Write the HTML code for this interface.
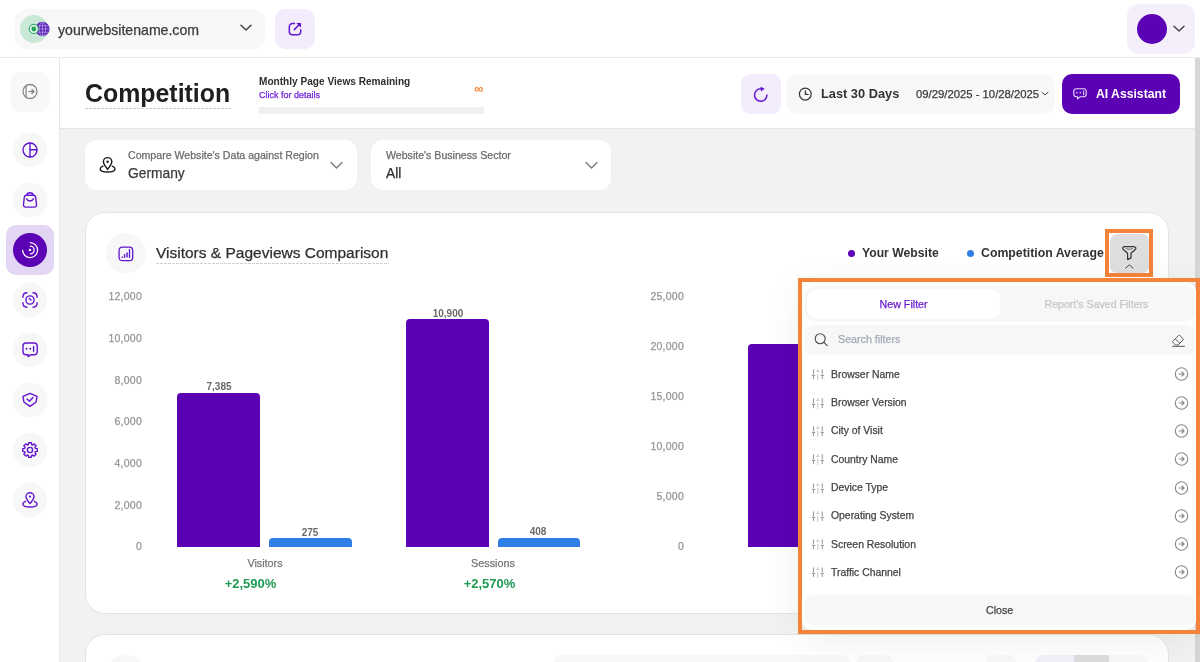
<!DOCTYPE html>
<html><head><meta charset="utf-8">
<style>
*{box-sizing:border-box;margin:0;padding:0}
html,body{width:1200px;height:662px;overflow:hidden;background:#fff;font-family:"Liberation Sans",sans-serif;color:#333}
#root{position:absolute;left:0;top:0;width:1200px;height:662px;overflow:hidden;will-change:transform}
.a{position:absolute}
svg{position:absolute;overflow:visible}
.t{position:absolute;white-space:nowrap;line-height:1;-webkit-text-stroke:0.25px currentColor}
.t[style*="font-weight:700"]{-webkit-text-stroke:0}
</style></head><body><div id="root">
<!-- HEADER -->
<div class="a" style="left:0;top:0;width:1200px;height:57px;background:#fff"></div>
<div class="a" style="left:0;top:57px;width:1200px;height:1px;background:#ebebeb"></div>
<!-- site selector -->
<div class="a" style="left:15px;top:9px;width:250px;height:40px;background:#f8f8f8;border-radius:12px"></div>
<div class="a" style="left:20px;top:15px;width:28px;height:28px;border-radius:50%;background:#c9e8d6"></div>
<svg style="left:0;top:0" width="60" height="60">
  <circle cx="42.4" cy="29" r="7.2" fill="#5a1fb8"/>
  <g stroke="#c9b8ef" stroke-width="0.6" fill="none"><ellipse cx="42.4" cy="29" rx="3.2" ry="7"/><line x1="35.5" y1="25.8" x2="49.3" y2="25.8"/><line x1="35.2" y1="29" x2="49.6" y2="29"/><line x1="35.5" y1="32.2" x2="49.3" y2="32.2"/><line x1="42.4" y1="22" x2="42.4" y2="36"/></g>
  <circle cx="33.8" cy="29" r="4.6" fill="#e3f3ea" stroke="#1fa35a" stroke-width="1"/>
  <circle cx="33.8" cy="29" r="2.4" fill="#1fa35a"/>
</svg>
<div class="t" style="left:58px;top:23px;font-size:14.1px;color:#3a3a3a">yourwebsitename.com</div>
<svg style="left:240px;top:24px" width="12" height="8"><path d="M1 1.2 L6 6 L11 1.2" stroke="#444" stroke-width="1.5" fill="none" stroke-linecap="round" stroke-linejoin="round"/></svg>
<!-- external link btn -->
<div class="a" style="left:275px;top:9px;width:40px;height:40px;background:#f2ecfc;border-radius:10px"></div>
<svg style="left:287px;top:21px" width="16" height="16"><path d="M7.5 2.6 H5.6 a3.3 3.3 0 0 0 -3.3 3.3 V10.4 a3.3 3.3 0 0 0 3.3 3.3 H10.4 a3.3 3.3 0 0 0 3.3 -3.3 V8.8" stroke="#6316d0" stroke-width="1.5" fill="none" stroke-linecap="round"/><path d="M7.3 8.6 L12.6 3.3" stroke="#6316d0" stroke-width="1.5" stroke-linecap="round"/><path d="M9.2 1.9 H14 V6.7 Z" fill="#6316d0"/></svg>
<!-- avatar -->
<div class="a" style="left:1127px;top:4px;width:68px;height:49.5px;background:#f4effb;border-radius:12px"></div>
<div class="a" style="left:1136.5px;top:14px;width:30px;height:30px;border-radius:50%;background:#5b02b5"></div>
<svg style="left:1173px;top:25px" width="12" height="8"><path d="M1 1.2 L6 6 L11 1.2" stroke="#444" stroke-width="1.5" fill="none" stroke-linecap="round" stroke-linejoin="round"/></svg>

<!-- SIDEBAR -->
<div class="a" style="left:59px;top:58px;width:1px;height:604px;background:#e6e6e6"></div>
<div class="a" style="left:10px;top:72px;width:40px;height:40px;background:#f8f8f8;border-radius:10px"></div>
<svg style="left:0;top:0" width="60" height="662">
  <g fill="#f7f7f7">
    <circle cx="30" cy="150" r="17.3"/><circle cx="30" cy="200" r="17.3"/>
    <circle cx="30" cy="300" r="17.3"/><circle cx="30" cy="350" r="17.3"/>
    <circle cx="30" cy="400" r="17.3"/><circle cx="30" cy="450" r="17.3"/><circle cx="30" cy="500" r="17.3"/>
  </g>
  <!-- collapse icon -->
  <g stroke="#8a8a8a" stroke-width="1.3" fill="none" stroke-linecap="round" stroke-linejoin="round">
    <circle cx="30" cy="91.5" r="7"/><line x1="26.1" y1="85.8" x2="26.1" y2="97.2"/><path d="M29 91.5 H34 M32 89.5 L34.1 91.5 L32 93.5"/>
  </g>
  <g stroke="#6316d0" stroke-width="1.4" fill="none" stroke-linecap="round" stroke-linejoin="round">
    <!-- pie -->
    <circle cx="30" cy="150" r="7"/><line x1="30" y1="143" x2="30" y2="157"/><line x1="30" y1="149.8" x2="37" y2="149.8"/>
    <!-- bag -->
    <path d="M26.5 195.3 H33.5 C35 195.3 35.5 196.3 35.7 197.5 L36.5 204.5 C36.7 206 35.9 207.1 34.4 207.1 H25.6 C24.1 207.1 23.3 206 23.5 204.5 L24.3 197.5 C24.5 196.3 25 195.3 26.5 195.3 Z"/>
    <path d="M26.9 195.3 C26.9 193.6 28.1 192.7 30 192.7 C31.9 192.7 33.1 193.6 33.1 195.3"/>
    <path d="M26.6 198.8 C27.1 200.2 28.3 201 30 201 C31.7 201 32.9 200.2 33.4 198.8"/>
    <!-- scan -->
    <path d="M22.9 297.3 C22.9 294.6 24.4 292.8 27 292.8 M33 292.8 C35.6 292.8 37.1 294.6 37.1 297.3 M37.1 302.7 C37.1 305.4 35.6 307.2 33 307.2 M27 307.2 C24.4 307.2 22.9 305.4 22.9 302.7"/>
    <circle cx="30" cy="300" r="4.1"/><line x1="29.3" y1="298.5" x2="31" y2="300.1"/>
    <!-- chat -->
    <path d="M26 343 H34.2 a3 3 0 0 1 3 3 V351.7 a3 3 0 0 1 -3 3 H31 L28.2 356.6 V354.7 H26 a3 3 0 0 1 -3 -3 V346 a3 3 0 0 1 3 -3 Z"/>
    <line x1="33.6" y1="346.4" x2="33.6" y2="351.3"/>
    <!-- shield -->
    <path d="M30 393.3 L37 396.3 L36.1 402 L30 406.4 L23.9 402 L23 396.3 Z"/>
    <path d="M27.1 398.9 L29.4 401.2 L32.9 397.6"/>
    <!-- gear -->
    <circle cx="30" cy="450" r="2.6"/>
    <path d="M28.36 444.64 L28.59 442.74 L31.41 442.74 L31.64 444.64 L32.63 445.06 L34.14 443.87 L36.13 445.86 L34.94 447.37 L35.36 448.36 L37.26 448.59 L37.26 451.41 L35.36 451.64 L34.94 452.63 L36.13 454.14 L34.14 456.13 L32.63 454.94 L31.64 455.36 L31.41 457.26 L28.59 457.26 L28.36 455.36 L27.37 454.94 L25.86 456.13 L23.87 454.14 L25.06 452.63 L24.64 451.64 L22.74 451.41 L22.74 448.59 L24.64 448.36 L25.06 447.37 L23.87 445.86 L25.86 443.87 L27.37 445.06 Z"/>
    <!-- pin -->
    <path d="M30 503.6 C27.5 500.6 26 498.6 26 496.7 a4 4 0 0 1 8 0 C34 498.6 32.5 500.6 30 503.6 Z"/>
    <path d="M25.6 501.3 C23.8 502 22.8 503 22.8 504 C22.8 505.7 26 507 30 507 C34 507 37.2 505.7 37.2 504 C37.2 503 36.2 502 34.4 501.3"/>
  </g>
  <g fill="#6316d0"><circle cx="26.5" cy="348.7" r="0.95"/><circle cx="30.3" cy="348.7" r="0.95"/><circle cx="30" cy="496.6" r="1.15"/></g>
</svg>
<!-- active item -->
<div class="a" style="left:6px;top:225px;width:48px;height:50px;background:#e3d6f4;border-radius:10px"></div>
<div class="a" style="left:12.6px;top:232.6px;width:34.8px;height:34.8px;background:#5b02b5;border-radius:50%"></div>
<svg style="left:0;top:0" width="60" height="300">
  <g stroke="#fff" stroke-width="1.3" fill="none" stroke-linecap="round">
    <path d="M30.3 242.6 A7.5 7.5 0 1 1 22.6 250.3"/>
    <path d="M30.3 246.2 A3.8 3.8 0 0 1 30.3 253.8"/>
  </g>
  <circle cx="30" cy="250" r="1.3" fill="#fff"/>
</svg>

<!-- CONTENT TOP BAND -->
<div class="a" style="left:60px;top:128px;width:1135px;height:1px;background:#e6e6e6"></div>
<div class="a" style="left:60px;top:129px;width:1135px;height:533px;background:#f2f2f2"></div>
<div class="a" style="left:1195px;top:58px;width:5px;height:604px;background:#d6d6d6"></div>

<div class="t" style="left:85px;top:81px;font-size:24.9px;font-weight:700;color:#1e1e1e">Competition</div>
<div class="a" style="left:85px;top:108px;width:146px;height:1px;background:repeating-linear-gradient(to right,#cdcdcd 0 2.7px,transparent 2.7px 4px)"></div>

<div class="t" style="left:259px;top:76.5px;font-size:10.1px;font-weight:700;color:#2e2e2e">Monthly Page Views Remaining</div>
<div class="t" style="left:259px;top:91px;font-size:9px;color:#6f22d8">Click for details</div>
<div class="t" style="left:474px;top:81.5px;font-size:13px;font-weight:700;color:#f5822f">∞</div>
<div class="a" style="left:259px;top:107px;width:225px;height:7px;background:#efefef"></div>

<!-- refresh -->
<div class="a" style="left:741px;top:74px;width:40px;height:40px;background:#f2ecfc;border-radius:9px"></div>
<svg style="left:753px;top:86px" width="16" height="16"><path d="M13.9 9.05 A6.2 6.2 0 1 1 7.9 2.85" stroke="#6316d0" stroke-width="1.5" fill="none" stroke-linecap="round"/><path d="M7.9 0.9 L11.3 3 L8.1 5 Z" fill="#6316d0" stroke="#6316d0" stroke-width="0.5" stroke-linejoin="round"/></svg>
<!-- date -->
<div class="a" style="left:787px;top:74px;width:268px;height:40px;background:#f8f8f8;border-radius:10px"></div>
<svg style="left:797px;top:86px" width="16" height="16"><circle cx="8.3" cy="8.1" r="5.9" stroke="#3a3a3a" stroke-width="1.25" fill="none"/><path d="M8.4 4.9 V8.4 H11.1" stroke="#3a3a3a" stroke-width="1.35" fill="none" stroke-linecap="round" stroke-linejoin="round"/></svg>
<div class="t" style="left:821px;top:88px;font-size:12.8px;font-weight:700;color:#333">Last 30 Days</div>
<div class="t" style="left:916px;top:89px;font-size:11.3px;color:#3a3a3a">09/29/2025 - 10/28/2025</div>
<svg style="left:1041px;top:91px" width="8" height="6"><path d="M1 1.2 L4 4 L7 1.2" stroke="#444" stroke-width="1" fill="none" stroke-linecap="round"/></svg>
<!-- AI button -->
<div class="a" style="left:1062px;top:74px;width:118px;height:40px;background:#5b02b5;border-radius:10px"></div>
<svg style="left:1072px;top:86px" width="16" height="16"><path d="M4.2 2.7 H11.8 a2.4 2.4 0 0 1 2.4 2.4 V8.3 a2.4 2.4 0 0 1 -2.4 2.4 H8.2 L5.6 12.9 V10.7 H4.2 a2.4 2.4 0 0 1 -2.4 -2.4 V5.1 a2.4 2.4 0 0 1 2.4 -2.4 Z" stroke="#eadff7" stroke-width="1.1" fill="none" stroke-linejoin="round"/><circle cx="4.8" cy="6.7" r="0.85" fill="#c9b3ec"/><circle cx="8.3" cy="6.7" r="0.85" fill="#c9b3ec"/><line x1="11.6" y1="4.7" x2="11.6" y2="8.7" stroke="#d7c6f2" stroke-width="1.1" stroke-linecap="round"/></svg>
<div class="t" style="left:1096px;top:88px;font-size:12.2px;font-weight:700;color:#fff">AI Assistant</div>

<!-- FILTER BOXES -->
<div class="a" style="left:85px;top:140px;width:272px;height:50px;background:#fff;border-radius:12px"></div>
<svg style="left:0;top:0" width="130" height="200"><g transform="translate(77.6 -335.1)" stroke="#1a1a1a" stroke-width="1.4" fill="none" stroke-linecap="round" stroke-linejoin="round"><path d="M30 504.4 C27.4 501.2 25.8 499 25.8 496.9 a4.2 4.2 0 0 1 8.4 0 C34.2 499 32.6 501.2 30 504.4 Z"/><path d="M25.4 501.2 C23.6 501.9 22.6 503 22.6 504 C22.6 505.8 25.9 507.1 30 507.1 C34.1 507.1 37.4 505.8 37.4 504 C37.4 503 36.4 501.9 34.6 501.2"/></g><circle cx="107.6" cy="161.7" r="1.2" fill="#1a1a1a"/></svg>
<div class="t" style="left:128px;top:149.7px;font-size:10.6px;color:#6b6b6b">Compare Website's Data against Region</div>
<div class="t" style="left:128px;top:166.5px;font-size:13.8px;color:#3c3c3c">Germany</div>
<svg style="left:330px;top:161px" width="14" height="9"><path d="M1 1.5 L6.5 7 L12 1.5" stroke="#777" stroke-width="1.3" fill="none" stroke-linecap="round" stroke-linejoin="round"/></svg>

<div class="a" style="left:371px;top:140px;width:240px;height:50px;background:#fff;border-radius:12px"></div>
<div class="t" style="left:386px;top:149.7px;font-size:10.6px;color:#6b6b6b">Website's Business Sector</div>
<div class="t" style="left:386px;top:166.5px;font-size:13.8px;color:#2c2c2c">All</div>
<svg style="left:585px;top:161px" width="14" height="9"><path d="M1 1.5 L6.5 7 L12 1.5" stroke="#777" stroke-width="1.3" fill="none" stroke-linecap="round" stroke-linejoin="round"/></svg>

<!-- MAIN CARD -->
<div class="a" style="left:85px;top:212px;width:1084px;height:402px;background:#fff;border:1px solid #e4e4e4;border-radius:20px"></div>
<div class="a" style="left:106px;top:233px;width:40px;height:40px;background:#f7f7f7;border-radius:50%"></div>
<svg style="left:118px;top:245.5px" width="16" height="16"><rect x="1.1" y="1.1" width="13.6" height="13.6" rx="3.2" stroke="#6316d0" stroke-width="1.3" fill="none"/><g stroke="#6316d0" stroke-width="1.3" stroke-linecap="round"><line x1="4.2" y1="11" x2="4.2" y2="11.4"/><line x1="6.5" y1="8.6" x2="6.5" y2="11.4"/><line x1="9" y1="6.4" x2="9" y2="11.4" stroke-width="1.5" stroke-linecap="butt"/><line x1="11.5" y1="3.6" x2="11.5" y2="11.4"/></g></svg>
<div class="t" style="left:156px;top:245px;font-size:15.5px;color:#303030">Visitors &amp; Pageviews Comparison</div>
<div class="a" style="left:156px;top:263px;width:233px;height:1px;background:repeating-linear-gradient(to right,#d0d0d0 0 2.7px,transparent 2.7px 4px)"></div>

<!-- legend -->
<div class="a" style="left:847.5px;top:249.8px;width:7px;height:7px;border-radius:50%;background:#5b02b5"></div>
<div class="t" style="left:862px;top:246.5px;font-size:12.2px;font-weight:700;color:#333">Your Website</div>
<div class="a" style="left:966.5px;top:249.8px;width:7px;height:7px;border-radius:50%;background:#2f7fe6"></div>
<div class="t" style="left:981px;top:246.5px;font-size:12.3px;font-weight:700;color:#333">Competition Average</div>

<!-- chart 1 -->
<div class="t" style="left:108px;top:291.3px;font-size:10.5px;color:#959595;letter-spacing:0.25px;width:34px;text-align:right">12,000</div>
<div class="t" style="left:108px;top:333.3px;font-size:10.5px;color:#959595;letter-spacing:0.25px;width:34px;text-align:right">10,000</div>
<div class="t" style="left:108px;top:375.3px;font-size:10.5px;color:#959595;letter-spacing:0.25px;width:34px;text-align:right">8,000</div>
<div class="t" style="left:108px;top:416.3px;font-size:10.5px;color:#959595;letter-spacing:0.25px;width:34px;text-align:right">6,000</div>
<div class="t" style="left:108px;top:458.3px;font-size:10.5px;color:#959595;letter-spacing:0.25px;width:34px;text-align:right">4,000</div>
<div class="t" style="left:108px;top:500.3px;font-size:10.5px;color:#959595;letter-spacing:0.25px;width:34px;text-align:right">2,000</div>
<div class="t" style="left:108px;top:541.3px;font-size:10.5px;color:#959595;letter-spacing:0.25px;width:34px;text-align:right">0</div>

<div class="a" style="left:177px;top:392.5px;width:83px;height:154px;background:#5b02b5;border-radius:4px 4px 0 0"></div>
<div class="a" style="left:269px;top:538px;width:83px;height:8.5px;background:#2f7fe6;border-radius:4px 4px 0 0"></div>
<div class="a" style="left:406px;top:319px;width:83px;height:227.5px;background:#5b02b5;border-radius:4px 4px 0 0"></div>
<div class="a" style="left:498px;top:538px;width:82px;height:8.5px;background:#2f7fe6;border-radius:4px 4px 0 0"></div>

<div class="t" style="left:179px;top:382px;width:80px;text-align:center;font-size:10px;font-weight:700;color:#6a6a6a">7,385</div>
<div class="t" style="left:270px;top:528px;width:80px;text-align:center;font-size:10px;font-weight:700;color:#6a6a6a">275</div>
<div class="t" style="left:408px;top:309px;width:80px;text-align:center;font-size:10px;font-weight:700;color:#6a6a6a">10,900</div>
<div class="t" style="left:498px;top:527px;width:80px;text-align:center;font-size:10px;font-weight:700;color:#6a6a6a">408</div>

<div class="t" style="left:215px;top:558px;width:100px;text-align:center;font-size:10.8px;color:#777">Visitors</div>
<div class="t" style="left:200.5px;top:576.5px;width:100px;text-align:center;font-size:13px;font-weight:700;color:#1e9a55">+2,590%</div>
<div class="t" style="left:443px;top:558px;width:100px;text-align:center;font-size:10.8px;color:#777">Sessions</div>
<div class="t" style="left:439.5px;top:576.5px;width:100px;text-align:center;font-size:13px;font-weight:700;color:#1e9a55">+2,570%</div>

<!-- chart 2 -->
<div class="t" style="left:640px;top:291.3px;font-size:10.5px;color:#959595;letter-spacing:0.25px;width:44px;text-align:right">25,000</div>
<div class="t" style="left:640px;top:341.3px;font-size:10.5px;color:#959595;letter-spacing:0.25px;width:44px;text-align:right">20,000</div>
<div class="t" style="left:640px;top:391.3px;font-size:10.5px;color:#959595;letter-spacing:0.25px;width:44px;text-align:right">15,000</div>
<div class="t" style="left:640px;top:441.3px;font-size:10.5px;color:#959595;letter-spacing:0.25px;width:44px;text-align:right">10,000</div>
<div class="t" style="left:640px;top:491.3px;font-size:10.5px;color:#959595;letter-spacing:0.25px;width:44px;text-align:right">5,000</div>
<div class="t" style="left:640px;top:541.3px;font-size:10.5px;color:#959595;letter-spacing:0.25px;width:44px;text-align:right">0</div>
<div class="a" style="left:748px;top:344px;width:83px;height:202.5px;background:#5b02b5;border-radius:4px 4px 0 0"></div>

<!-- funnel button -->
<div class="a" style="left:1105px;top:229px;width:48px;height:48px;border:4px solid #f5843a"></div>
<div class="a" style="left:1110px;top:234px;width:39px;height:39px;background:#dedede;border-radius:7px"></div>
<svg style="left:1120px;top:245px" width="18" height="28"><path d="M4.5 1.6 H13.5 C16 1.6 16.5 3.6 15 4.8 L11 8.3 V12.9 L7.6 14.6 V8.3 L3.6 4.8 C2.1 3.6 2.6 1.6 4.5 1.6 Z" stroke="#333" stroke-width="1.2" fill="none" stroke-linejoin="round"/><path d="M6 3.6 C8 4.4 10.8 4.4 12.8 3.6" stroke="#777" stroke-width="1.1" fill="none"/><path d="M5.6 23.2 L9.3 19.8 L13 23.2" stroke="#444" stroke-width="1" fill="none" stroke-linecap="round"/></svg>

<!-- SECOND CARD -->
<div class="a" style="left:85px;top:634px;width:1084px;height:60px;background:#fff;border:1px solid #e4e4e4;border-radius:20px"></div>
<div class="a" style="left:106px;top:655px;width:40px;height:40px;background:#f7f7f7;border-radius:50%"></div>
<div class="a" style="left:553px;top:655px;width:298px;height:30px;background:#f8f8f8;border-radius:9px"></div>
<div class="a" style="left:856px;top:655px;width:38px;height:30px;background:#f8f8f8;border-radius:9px"></div>
<div class="a" style="left:985px;top:655px;width:32px;height:30px;background:#f8f8f8;border-radius:9px"></div>
<div class="a" style="left:1035px;top:655px;width:113px;height:30px;background:#f3effb;border-radius:9px;overflow:hidden"><div class="a" style="left:39px;top:0;width:35px;height:30px;background:#dddddd"></div><div class="a" style="left:74px;top:0;width:39px;height:30px;background:#f8f8f8"></div></div>

<!-- POPUP -->
<div class="a" style="left:802px;top:282px;width:394px;height:348px;background:#fff;border-radius:10px;box-shadow:0 8px 40px rgba(0,0,0,0.08)"></div>
<div class="a" style="left:798px;top:278px;width:402px;height:356px;border:4px solid #f5843a"></div>
<div class="a" style="left:805px;top:286px;width:390px;height:36px;background:#f7f7f7;border-radius:10px"></div>
<div class="a" style="left:807px;top:289px;width:193px;height:30px;background:#fff;border-radius:9px"></div>
<div class="t" style="left:879.5px;top:299px;font-size:10.7px;color:#6a1fd0">New Filter</div>
<div class="t" style="left:1044.5px;top:299px;font-size:10.6px;color:#c6c6c6">Report's Saved Filters</div>
<div class="a" style="left:805px;top:325px;width:390px;height:30px;background:#f7f7f7;border-radius:8px"></div>
<svg style="left:814px;top:332px" width="16" height="16"><circle cx="6.2" cy="6.7" r="5" stroke="#505050" stroke-width="1.15" fill="none"/><line x1="9.9" y1="10.4" x2="13.2" y2="13.6" stroke="#505050" stroke-width="1.2" stroke-linecap="round"/></svg>
<div class="t" style="left:838px;top:334px;font-size:10.7px;color:#a3aab8">Search filters</div>
<svg style="left:1171px;top:333px" width="16" height="16"><path d="M1.5 8.5 L7.5 2.5 a1 1 0 0 1 1.4 0 L12 5.6 a1 1 0 0 1 0 1.4 L7 12 H4.5 L1.5 9 Z" stroke="#555" stroke-width="0.95" fill="none" stroke-linejoin="round"/><line x1="4.3" y1="5.8" x2="8.7" y2="10.2" stroke="#555" stroke-width="0.95"/><line x1="1.5" y1="13.3" x2="13.5" y2="13.3" stroke="#555" stroke-width="1" stroke-linecap="round"/></svg>

<svg style="left:811px;top:367.3px" width="14" height="14"><g stroke="#9c9c9c" stroke-width="1.1" stroke-linecap="round"><path d="M2.5 2.8 V6.4 M2.5 9.3 V11.6 M1.3 8.4 H3.7 M11.3 2.8 V6.4 M11.3 9.3 V11.6 M10.1 8.4 H12.5"/><path d="M6.8 7 V12.4 M5.6 4.3 H8 M6.8 2.4 V3.6" stroke="#cfcfcf" stroke-width="1.2"/></g></svg>
<div class="t" style="left:831px;top:369.8px;font-size:10.4px;color:#444">Browser Name</div>
<svg style="left:1174px;top:367.3px" width="14" height="14"><circle cx="7.5" cy="7" r="6.2" stroke="#8a8a8a" stroke-width="1.1" fill="none"/><path d="M5.2 7 H10 M8 5 L10 7 L8 9" stroke="#8a8a8a" stroke-width="1.1" fill="none" stroke-linecap="round" stroke-linejoin="round"/></svg>
<svg style="left:811px;top:395.6px" width="14" height="14"><g stroke="#9c9c9c" stroke-width="1.1" stroke-linecap="round"><path d="M2.5 2.8 V6.4 M2.5 9.3 V11.6 M1.3 8.4 H3.7 M11.3 2.8 V6.4 M11.3 9.3 V11.6 M10.1 8.4 H12.5"/><path d="M6.8 7 V12.4 M5.6 4.3 H8 M6.8 2.4 V3.6" stroke="#cfcfcf" stroke-width="1.2"/></g></svg>
<div class="t" style="left:831px;top:398.1px;font-size:10.4px;color:#444">Browser Version</div>
<svg style="left:1174px;top:395.6px" width="14" height="14"><circle cx="7.5" cy="7" r="6.2" stroke="#8a8a8a" stroke-width="1.1" fill="none"/><path d="M5.2 7 H10 M8 5 L10 7 L8 9" stroke="#8a8a8a" stroke-width="1.1" fill="none" stroke-linecap="round" stroke-linejoin="round"/></svg>
<svg style="left:811px;top:423.9px" width="14" height="14"><g stroke="#9c9c9c" stroke-width="1.1" stroke-linecap="round"><path d="M2.5 2.8 V6.4 M2.5 9.3 V11.6 M1.3 8.4 H3.7 M11.3 2.8 V6.4 M11.3 9.3 V11.6 M10.1 8.4 H12.5"/><path d="M6.8 7 V12.4 M5.6 4.3 H8 M6.8 2.4 V3.6" stroke="#cfcfcf" stroke-width="1.2"/></g></svg>
<div class="t" style="left:831px;top:426.4px;font-size:10.4px;color:#444">City of Visit</div>
<svg style="left:1174px;top:423.9px" width="14" height="14"><circle cx="7.5" cy="7" r="6.2" stroke="#8a8a8a" stroke-width="1.1" fill="none"/><path d="M5.2 7 H10 M8 5 L10 7 L8 9" stroke="#8a8a8a" stroke-width="1.1" fill="none" stroke-linecap="round" stroke-linejoin="round"/></svg>
<svg style="left:811px;top:452.2px" width="14" height="14"><g stroke="#9c9c9c" stroke-width="1.1" stroke-linecap="round"><path d="M2.5 2.8 V6.4 M2.5 9.3 V11.6 M1.3 8.4 H3.7 M11.3 2.8 V6.4 M11.3 9.3 V11.6 M10.1 8.4 H12.5"/><path d="M6.8 7 V12.4 M5.6 4.3 H8 M6.8 2.4 V3.6" stroke="#cfcfcf" stroke-width="1.2"/></g></svg>
<div class="t" style="left:831px;top:454.7px;font-size:10.4px;color:#444">Country Name</div>
<svg style="left:1174px;top:452.2px" width="14" height="14"><circle cx="7.5" cy="7" r="6.2" stroke="#8a8a8a" stroke-width="1.1" fill="none"/><path d="M5.2 7 H10 M8 5 L10 7 L8 9" stroke="#8a8a8a" stroke-width="1.1" fill="none" stroke-linecap="round" stroke-linejoin="round"/></svg>
<svg style="left:811px;top:480.5px" width="14" height="14"><g stroke="#9c9c9c" stroke-width="1.1" stroke-linecap="round"><path d="M2.5 2.8 V6.4 M2.5 9.3 V11.6 M1.3 8.4 H3.7 M11.3 2.8 V6.4 M11.3 9.3 V11.6 M10.1 8.4 H12.5"/><path d="M6.8 7 V12.4 M5.6 4.3 H8 M6.8 2.4 V3.6" stroke="#cfcfcf" stroke-width="1.2"/></g></svg>
<div class="t" style="left:831px;top:483.0px;font-size:10.4px;color:#444">Device Type</div>
<svg style="left:1174px;top:480.5px" width="14" height="14"><circle cx="7.5" cy="7" r="6.2" stroke="#8a8a8a" stroke-width="1.1" fill="none"/><path d="M5.2 7 H10 M8 5 L10 7 L8 9" stroke="#8a8a8a" stroke-width="1.1" fill="none" stroke-linecap="round" stroke-linejoin="round"/></svg>
<svg style="left:811px;top:508.8px" width="14" height="14"><g stroke="#9c9c9c" stroke-width="1.1" stroke-linecap="round"><path d="M2.5 2.8 V6.4 M2.5 9.3 V11.6 M1.3 8.4 H3.7 M11.3 2.8 V6.4 M11.3 9.3 V11.6 M10.1 8.4 H12.5"/><path d="M6.8 7 V12.4 M5.6 4.3 H8 M6.8 2.4 V3.6" stroke="#cfcfcf" stroke-width="1.2"/></g></svg>
<div class="t" style="left:831px;top:511.3px;font-size:10.4px;color:#444">Operating System</div>
<svg style="left:1174px;top:508.8px" width="14" height="14"><circle cx="7.5" cy="7" r="6.2" stroke="#8a8a8a" stroke-width="1.1" fill="none"/><path d="M5.2 7 H10 M8 5 L10 7 L8 9" stroke="#8a8a8a" stroke-width="1.1" fill="none" stroke-linecap="round" stroke-linejoin="round"/></svg>
<svg style="left:811px;top:537.1px" width="14" height="14"><g stroke="#9c9c9c" stroke-width="1.1" stroke-linecap="round"><path d="M2.5 2.8 V6.4 M2.5 9.3 V11.6 M1.3 8.4 H3.7 M11.3 2.8 V6.4 M11.3 9.3 V11.6 M10.1 8.4 H12.5"/><path d="M6.8 7 V12.4 M5.6 4.3 H8 M6.8 2.4 V3.6" stroke="#cfcfcf" stroke-width="1.2"/></g></svg>
<div class="t" style="left:831px;top:539.6px;font-size:10.4px;color:#444">Screen Resolution</div>
<svg style="left:1174px;top:537.1px" width="14" height="14"><circle cx="7.5" cy="7" r="6.2" stroke="#8a8a8a" stroke-width="1.1" fill="none"/><path d="M5.2 7 H10 M8 5 L10 7 L8 9" stroke="#8a8a8a" stroke-width="1.1" fill="none" stroke-linecap="round" stroke-linejoin="round"/></svg>
<svg style="left:811px;top:565.4px" width="14" height="14"><g stroke="#9c9c9c" stroke-width="1.1" stroke-linecap="round"><path d="M2.5 2.8 V6.4 M2.5 9.3 V11.6 M1.3 8.4 H3.7 M11.3 2.8 V6.4 M11.3 9.3 V11.6 M10.1 8.4 H12.5"/><path d="M6.8 7 V12.4 M5.6 4.3 H8 M6.8 2.4 V3.6" stroke="#cfcfcf" stroke-width="1.2"/></g></svg>
<div class="t" style="left:831px;top:567.9px;font-size:10.4px;color:#444">Traffic Channel</div>
<svg style="left:1174px;top:565.4px" width="14" height="14"><circle cx="7.5" cy="7" r="6.2" stroke="#8a8a8a" stroke-width="1.1" fill="none"/><path d="M5.2 7 H10 M8 5 L10 7 L8 9" stroke="#8a8a8a" stroke-width="1.1" fill="none" stroke-linecap="round" stroke-linejoin="round"/></svg>
<div class="a" style="left:805px;top:595px;width:390px;height:30px;background:#f7f7f7;border-radius:8px"></div>
<div class="t" style="left:986px;top:605px;font-size:10.6px;color:#444">Close</div>
</div></body></html>
